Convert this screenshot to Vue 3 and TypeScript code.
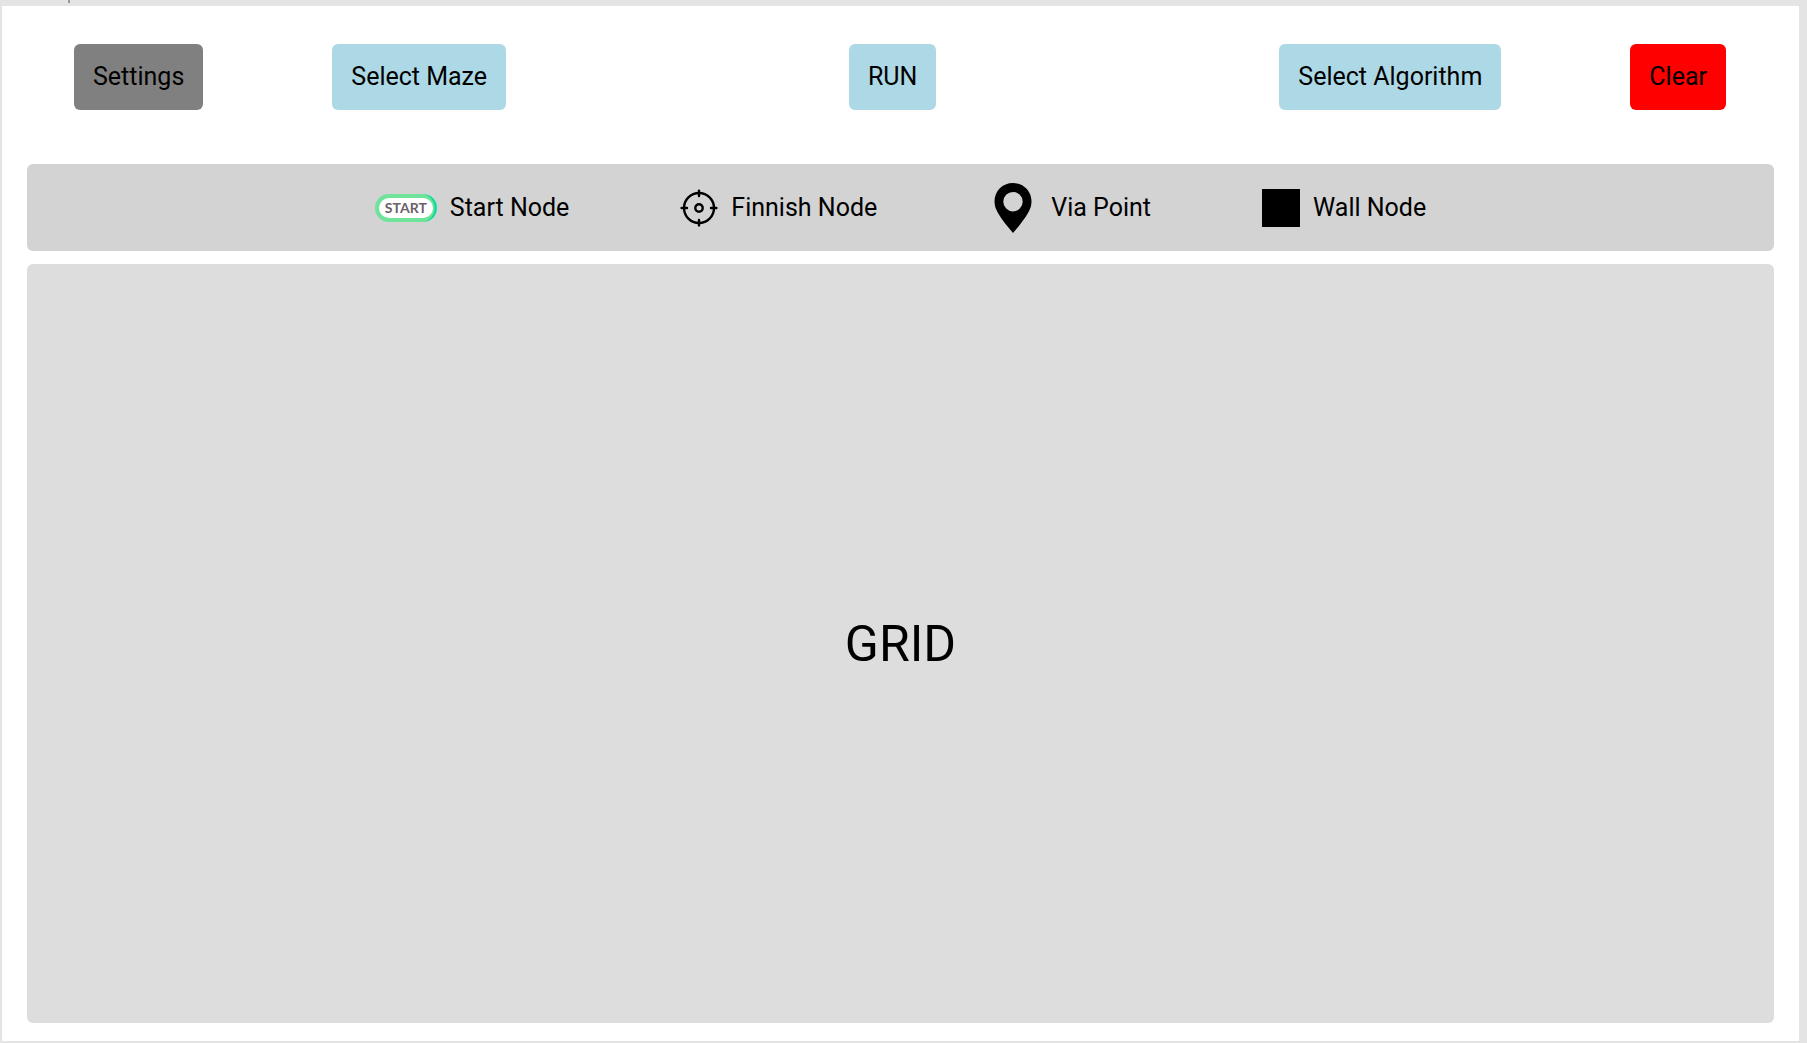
<script setup lang="ts">
interface Action {
  label: string
  tone: 'neutral' | 'primary' | 'danger'
}

const leftActions: Action[] = [
  { label: 'Settings', tone: 'neutral' },
  { label: 'Select Maze', tone: 'primary' },
]
const rightActions: Action[] = [
  { label: 'Select Algorithm', tone: 'primary' },
  { label: 'Clear', tone: 'danger' },
]
</script>

<template>
  <div class="page">
    <span class="tick" aria-hidden="true"></span>
    <main class="frame">
      <header class="toolbar">
        <div class="group">
          <button v-for="a in leftActions" :key="a.label" type="button" class="btn" :class="a.tone">{{ a.label }}</button>
        </div>
        <button type="button" class="btn primary">RUN</button>
        <div class="group">
          <button v-for="a in rightActions" :key="a.label" type="button" class="btn" :class="a.tone">{{ a.label }}</button>
        </div>
      </header>

      <ul class="legend">
        <li class="item">
          <span class="start-badge"><span class="start-inner">START</span></span>
          <span>Start Node</span>
        </li>
        <li class="item">
          <svg width="38" height="38" viewBox="0 0 38 38" fill="none" stroke="#000" stroke-width="2.4" stroke-linecap="round" aria-hidden="true">
            <circle cx="19" cy="19" r="15" />
            <circle cx="19" cy="19" r="3.7" />
            <path d="M19 1.6V7M19 31v5.4M1.6 19H7M31 19h5.4" />
          </svg>
          <span>Finnish Node</span>
        </li>
        <li class="item">
          <svg width="50" height="50" viewBox="0 0 50 50" aria-hidden="true">
            <path fill-rule="evenodd" d="M25 0C14.5 0 6.500 8 6.500 18.500C6.500 23 8 26.500 10 30C14 37 19.500 43.500 25 50C30.500 43.500 36 37 40 30C42 26.500 43.500 23 43.500 18.500C43.500 8 35.500 0 25 0ZM25 9A9.700 9.700 0 1 1 25 28.400A9.700 9.700 0 1 1 25 9Z" />
          </svg>
          <span>Via Point</span>
        </li>
        <li class="item">
          <span class="wall"></span>
          <span>Wall Node</span>
        </li>
      </ul>

      <section class="grid">GRID</section>
    </main>
  </div>
</template>

<style>
body {
  margin: 0;
  background: #e4e4e4;
}
</style>

<style scoped>
.page {
  position: relative;
  box-sizing: border-box;
  min-height: 100vh;
  padding: 6px 8px 2px 2px;
  display: flex;
  font-family: Roboto, "Liberation Sans", sans-serif;
  font-size: 25px;
  line-height: 30px;
  color: #000;
}

.tick {
  position: absolute;
  top: 0;
  left: 68px;
  width: 2px;
  height: 3px;
  background: #999;
}

.frame {
  flex: 1;
  box-sizing: border-box;
  display: flex;
  flex-direction: column;
  padding: 38px 25px 18px;
  background: #fff;
}

.toolbar {
  display: flex;
  justify-content: space-between;
  align-items: center;
  padding: 0 48px 0 47px;
  margin-bottom: 54px;
}

.group {
  display: flex;
  gap: 129px;
}

.btn {
  height: 66px;
  padding: 0 19px;
  border: 0;
  border-radius: 6px;
  font: inherit;
  color: inherit;
  white-space: nowrap;
  cursor: pointer;
}

.neutral {
  background: #808080;
}

.primary {
  background: #add8e6;
}

.danger {
  background: #f00;
}

.legend {
  display: flex;
  justify-content: center;
  gap: 111px;
  height: 87px;
  margin: 0 0 13px;
  padding: 0;
  list-style: none;
  border-radius: 6px;
  background: #d3d3d3;
}

.item {
  display: flex;
  align-items: center;
  gap: 13px;
  white-space: nowrap;
}

.start-badge {
  box-sizing: border-box;
  width: 62px;
  height: 28px;
  padding: 4px;
  border-radius: 14px;
  background: radial-gradient(circle at 45px 14px, #6fe39a 14px, transparent 15px),
    linear-gradient(90deg, #6fe39a 46px, #0fdc9c 48px);
}

.start-inner {
  display: block;
  height: 20px;
  border-radius: 10px;
  background: #fff;
  color: #6b5f6b;
  font: 700 14px/20px Lato, sans-serif;
  text-align: center;
}

.wall {
  width: 38px;
  height: 38px;
  background: #000;
}

.grid {
  flex: 1;
  display: flex;
  align-items: center;
  justify-content: center;
  border-radius: 6px;
  background: #ddd;
  font-size: 50px;
  line-height: 60px;
}
</style>
